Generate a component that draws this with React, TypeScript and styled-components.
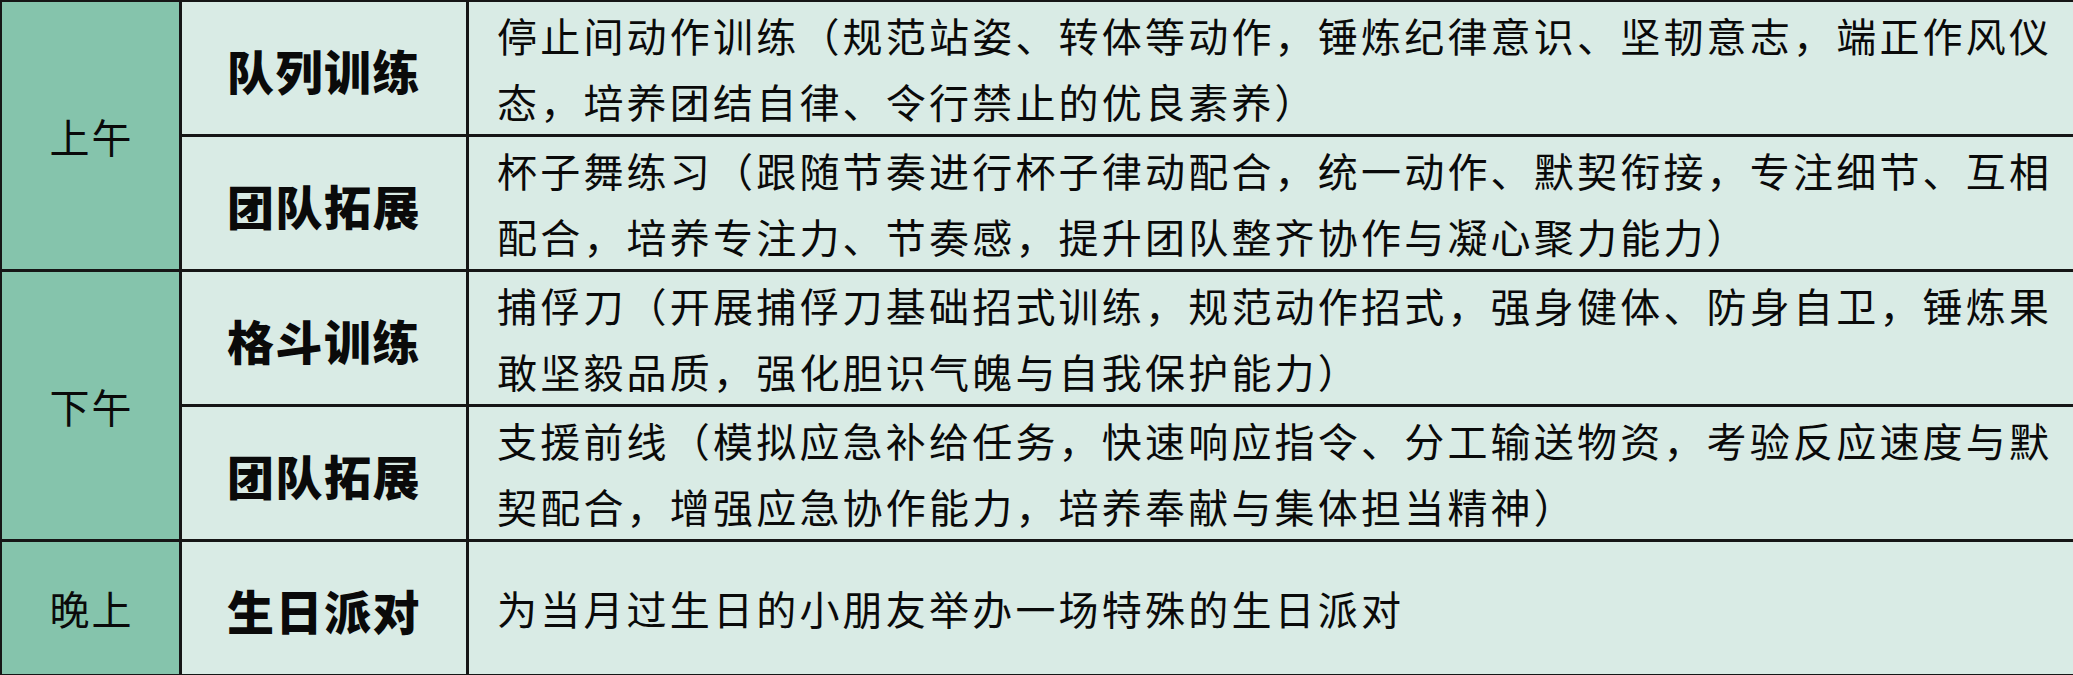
import React from "react";
import styled, { createGlobalStyle } from "styled-components";

const Global = createGlobalStyle`
  html, body { margin: 0; padding: 0; background: #ffffff; }
  body { font-family: "Noto Sans CJK SC", "Noto Sans", sans-serif; }
`;

const Table = styled.div`
  display: grid;
  grid-template-columns: 177px 284px 1fr;
  grid-template-rows: repeat(5, 1fr);
  gap: 3px;
  width: 2073px;
  height: 675px;
  box-sizing: border-box;
  padding: 2px 3px 1px 2px;
  background: #161616;
  color: #0a0a0a;
`;

const PeriodCell = styled.div<{ $span: number }>`
  grid-row: span ${(p) => p.$span};
  background: #85c4ac;
  display: flex;
  align-items: center;
  justify-content: center;
  font-size: 40px;
  font-weight: 400;
  letter-spacing: 2px;
  padding-left: 2px;
`;

const TitleCell = styled.div`
  background: #d9ebe5;
  display: flex;
  align-items: center;
  justify-content: center;
  font-size: 47px;
  font-weight: 900;
  letter-spacing: 1.5px;
  padding-top: 2px;
`;

const ContentCell = styled.div`
  background: #d9ebe5;
  display: flex;
  flex-direction: column;
  justify-content: center;
  padding: 0 24px 0 28px;
  font-size: 40px;
  font-weight: 400;
  letter-spacing: 3.2px;
`;

const Line = styled.div<{ $full?: boolean }>`
  line-height: 66px;
  white-space: nowrap;
  text-align: ${(p) => (p.$full ? "justify" : "left")};
  text-align-last: ${(p) => (p.$full ? "justify" : "left")};
`;

type Row = { title: string; lines: string[] };
type Period = { name: string; rows: Row[] };

const data: Period[] = [
  {
    name: "上午",
    rows: [
      {
        title: "队列训练",
        lines: [
          "停止间动作训练（规范站姿、转体等动作，锤炼纪律意识、坚韧意志，端正作风仪",
          "态，培养团结自律、令行禁止的优良素养）",
        ],
      },
      {
        title: "团队拓展",
        lines: [
          "杯子舞练习（跟随节奏进行杯子律动配合，统一动作、默契衔接，专注细节、互相",
          "配合，培养专注力、节奏感，提升团队整齐协作与凝心聚力能力）",
        ],
      },
    ],
  },
  {
    name: "下午",
    rows: [
      {
        title: "格斗训练",
        lines: [
          "捕俘刀（开展捕俘刀基础招式训练，规范动作招式，强身健体、防身自卫，锤炼果",
          "敢坚毅品质，强化胆识气魄与自我保护能力）",
        ],
      },
      {
        title: "团队拓展",
        lines: [
          "支援前线（模拟应急补给任务，快速响应指令、分工输送物资，考验反应速度与默",
          "契配合，增强应急协作能力，培养奉献与集体担当精神）",
        ],
      },
    ],
  },
  {
    name: "晚上",
    rows: [
      {
        title: "生日派对",
        lines: ["为当月过生日的小朋友举办一场特殊的生日派对"],
      },
    ],
  },
];

export default function App() {
  return (
    <>
      <Global />
      <Table>
        {data.map((period) =>
          period.rows.map((row, i) => (
            <React.Fragment key={period.name + i}>
              {i === 0 && <PeriodCell $span={period.rows.length}>{period.name}</PeriodCell>}
              <TitleCell>{row.title}</TitleCell>
              <ContentCell>
                {row.lines.map((l, j) => (
                  <Line key={j} $full={row.lines.length > 1 && j < row.lines.length - 1}>
                    {l}
                  </Line>
                ))}
              </ContentCell>
            </React.Fragment>
          ))
        )}
      </Table>
    </>
  );
}
